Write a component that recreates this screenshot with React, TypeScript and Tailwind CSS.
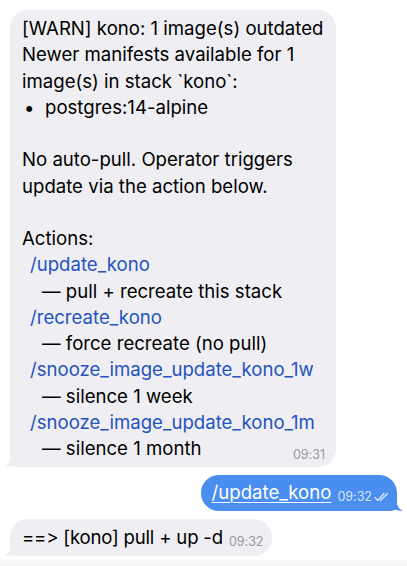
import React from "react";

type Line = { text: string; kind?: "link" | "note" | "bullet" | "blank" };

const lines: Line[] = [
  { text: "[WARN] kono: 1 image(s) outdated" },
  { text: "Newer manifests available for 1" },
  { text: "image(s) in stack `kono`:" },
  { text: "postgres:14-alpine", kind: "bullet" },
  { text: "", kind: "blank" },
  { text: "No auto-pull. Operator triggers" },
  { text: "update via the action below." },
  { text: "", kind: "blank" },
  { text: "Actions:" },
  { text: "/update_kono", kind: "link" },
  { text: "— pull + recreate this stack", kind: "note" },
  { text: "/recreate_kono", kind: "link" },
  { text: "— force recreate (no pull)", kind: "note" },
  { text: "/snooze_image_update_kono_1w", kind: "link" },
  { text: "— silence 1 week", kind: "note" },
  { text: "/snooze_image_update_kono_1m", kind: "link" },
  { text: "— silence 1 month", kind: "note" },
];

function TailLeft({ color }: { color: string }) {
  return (
    <svg className="absolute left-[-6px] bottom-0" width="16" height="18" viewBox="0 0 16 18">
      <path d="M6 0 V9 C6 13 4 16 0 18 C5 18 9 17 12 14 L16 18 V0 Z" fill={color} />
    </svg>
  );
}

function TailRight({ color }: { color: string }) {
  return (
    <svg className="absolute right-[-6px] bottom-0" width="16" height="18" viewBox="0 0 16 18">
      <path d="M10 0 V9 C10 13 12 16 16 18 C11 18 7 17 4 14 L0 18 V0 Z" fill={color} />
    </svg>
  );
}

function DoubleCheck() {
  return (
    <svg width="16" height="10" viewBox="0 0 16 10" fill="none" stroke="#dceafd" strokeWidth="1.3" strokeLinecap="round" strokeLinejoin="round">
      <path d="M1 5.5 L3.8 8.5 L10 1.5" />
      <path d="M6.5 8.5 L13.5 1.5" />
    </svg>
  );
}

export default function App() {
  return (
    <div className="w-[407px] h-[566px] bg-white flex flex-col pt-[10px] font-['Inter',sans-serif] [font-feature-settings:'calt'_0,'liga'_0] text-[18.6px] text-black overflow-hidden">
      {/* incoming alert */}
      <div className="relative ml-[10px] w-[326px] bg-[#efeff3] rounded-[18px] rounded-bl-[6px] pl-3 pr-3 pt-[5px] pb-[6px]">
        <TailLeft color="#efeff3" />
        {lines.map((l, i) => (
          <div key={i} className="h-[26.25px] leading-[26.25px] whitespace-nowrap relative">
            {l.kind === "link" && <span className="pl-[8px] text-[#2553c0]">{l.text}</span>}
            {l.kind === "note" && <span className="pl-[20px]">{l.text}</span>}
            {l.kind === "bullet" && (
              <span className="pl-[2px]">
                <span className="inline-block w-[21px]">•</span>
                {l.text}
              </span>
            )}
            {l.kind === undefined && <span>{l.text}</span>}
          </div>
        ))}
        <span className="absolute right-[11px] bottom-[6px] text-[12.5px] leading-none text-[#98989d]">09:31</span>
      </div>

      {/* outgoing command */}
      <div className="flex justify-end pr-[10px] mt-[8px]">
        <div className="relative bg-[#4a8ef0] rounded-[18px] rounded-br-[6px] pl-[11px] pr-[7px] pt-[4px] pb-[6px] flex items-end gap-[6px]">
          <TailRight color="#4a8ef0" />
          <span className="relative text-white underline underline-offset-[3px] decoration-1 leading-[26px] whitespace-nowrap">/update_kono</span>
          <span className="relative flex items-center gap-[2px] text-[12.5px] leading-none text-[#d3e4fc] mb-[2px]">
            09:32
            <DoubleCheck />
          </span>
        </div>
      </div>

      {/* bot reply */}
      <div className="flex mt-[8px] pl-[10px]">
        <div className="relative bg-[#efeff3] rounded-[18px] rounded-bl-[6px] pl-3 pr-[9px] pt-[5px] pb-[6px] flex items-end gap-[6px]">
          <TailLeft color="#efeff3" />
          <span className="relative leading-[26px] whitespace-nowrap tracking-[-0.2px]">==&gt; [kono] pull + up -d</span>
          <span className="relative text-[12.5px] leading-none text-[#98989d] mb-[2px]">09:32</span>
        </div>
      </div>

      <div className="flex-1" />
      <div className="h-[8px] bg-gradient-to-b from-white to-[#f4f4f6]" />
    </div>
  );
}
